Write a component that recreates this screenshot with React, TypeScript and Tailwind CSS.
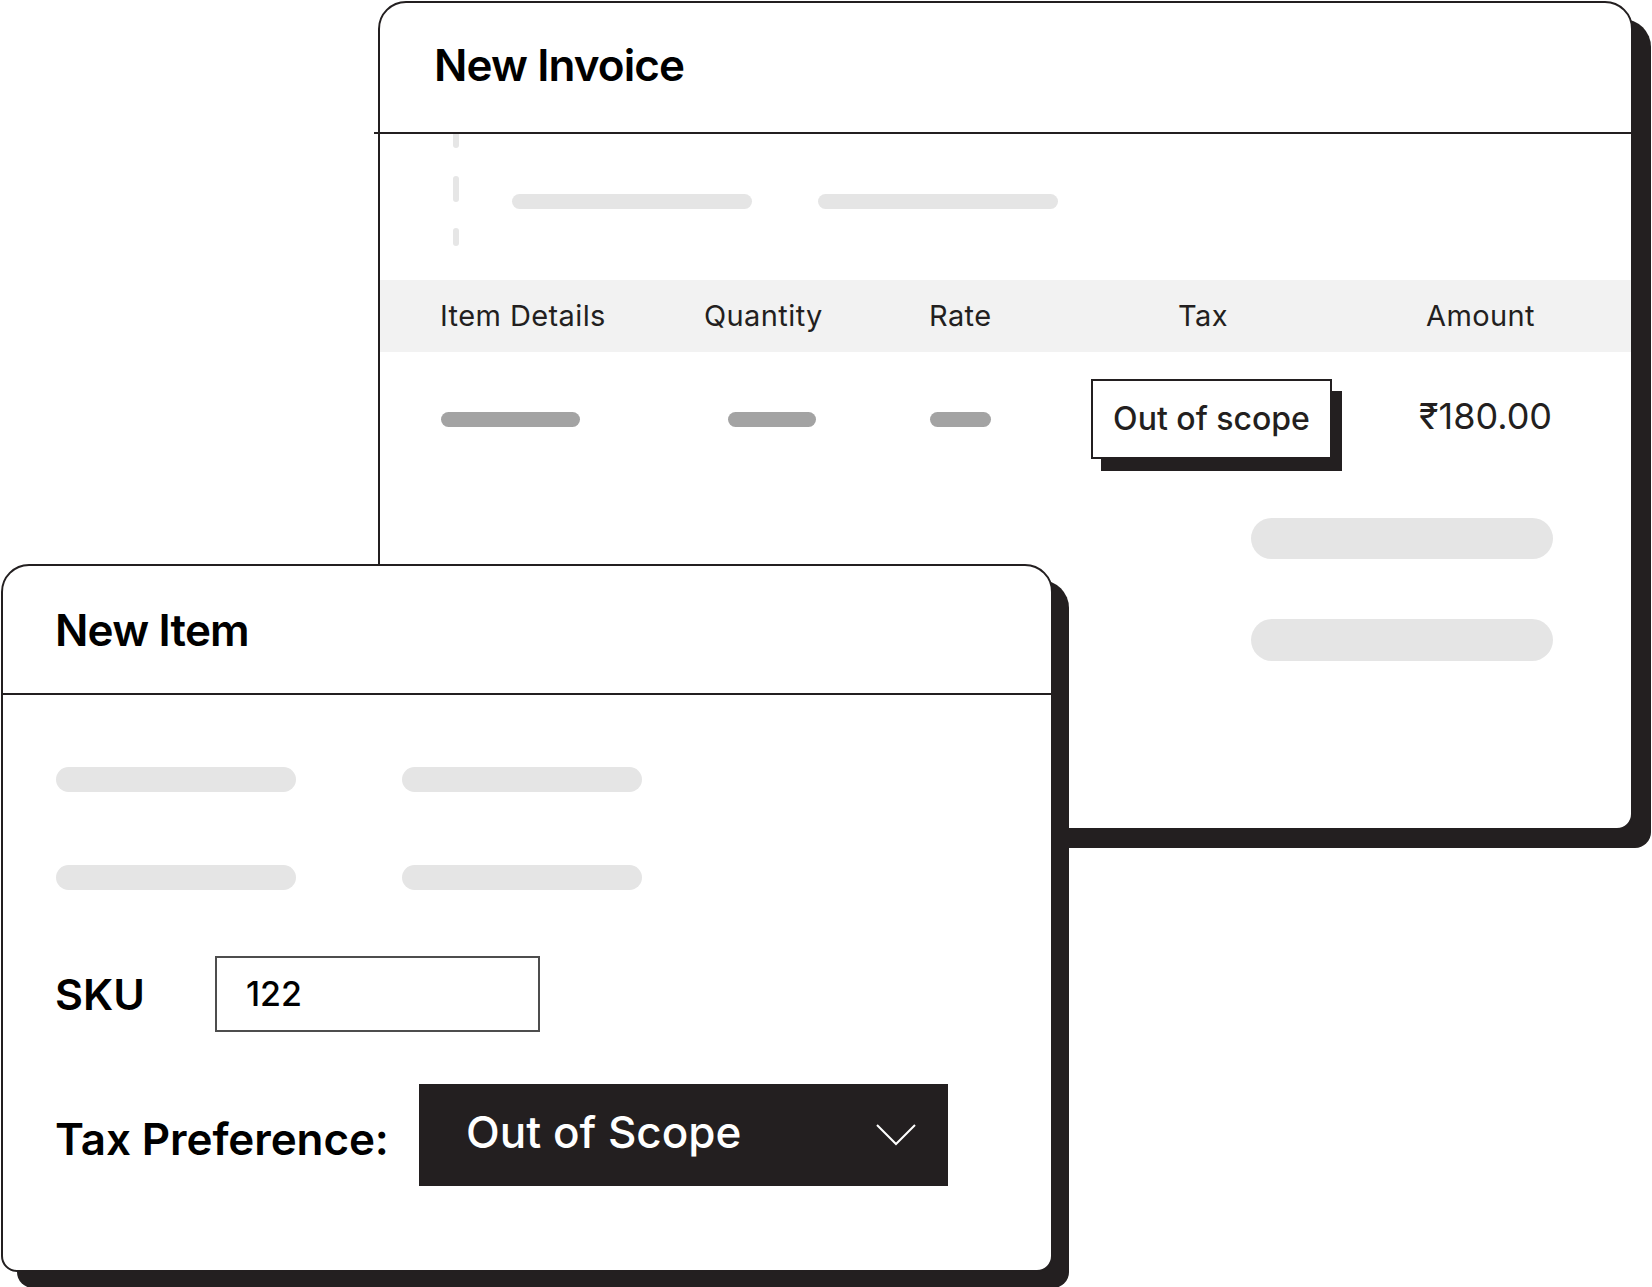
import React from 'react';

const Bar: React.FC<{ className: string }> = ({ className }) => (
  <div className={`rounded-full ${className}`} />
);

const InvoiceCard: React.FC = () => {
  return (
    <div className="absolute left-[378px] top-[1px] w-[1255px] h-[829px] bg-white border-2 border-[#231f20] rounded-t-[28px] rounded-b-[16px] shadow-[18px_18px_0_#231f20]">
      {/* header */}
      <div className="h-[129px] pl-[54px] pt-[36px]">
        <h1 className="text-[44px] leading-[53px] font-semibold text-black tracking-[-0.9px]">New Invoice</h1>
      </div>
      <div className="h-[2px] bg-[#231f20] -ml-[6px]" />

      {/* customer / dates placeholders */}
      <div className="h-[146px] flex">
        <div className="ml-[73px] flex flex-col">
          <div className="w-[6px] h-[14px] rounded-b-full bg-[#e6e6e6]" />
          <div className="w-[6px] h-[26px] mt-[28px] rounded-full bg-[#e6e6e6]" />
          <div className="w-[6px] h-[18px] mt-[26px] rounded-full bg-[#e6e6e6]" />
        </div>
        <div className="ml-[53px] mt-[60px] flex gap-[66px]">
          <Bar className="w-[240px] h-[15px] bg-[#e5e5e5]" />
          <Bar className="w-[240px] h-[15px] bg-[#e5e5e5]" />
        </div>
      </div>

      {/* table header */}
      <div className="h-[72px] bg-[#f2f2f2] flex items-center pl-[60px] text-[29px] font-normal tracking-[0.4px] text-[#231f20]">
        <div className="w-[264px]">Item Details</div>
        <div className="w-[225px]">Quantity</div>
        <div className="w-[249px]">Rate</div>
        <div className="w-[248px]">Tax</div>
        <div>Amount</div>
      </div>

      {/* row */}
      <div className="h-[134px] flex items-center">
        <Bar className="ml-[61px] w-[139px] h-[15px] bg-[#a3a3a3]" />
        <Bar className="ml-[148px] w-[88px] h-[15px] bg-[#a3a3a3]" />
        <Bar className="ml-[114px] w-[61px] h-[15px] bg-[#a3a3a3]" />
        <div className="ml-[100px] w-[241px] h-[80px] border-2 border-[#231f20] bg-white shadow-[10px_12px_0_#231f20] flex items-center justify-center text-[32px] font-medium text-[#231f20]">
          Out of scope
        </div>
        <div className="ml-[87px] mb-[6px] text-[36px] font-normal text-[#231f20]">₹180.00</div>
      </div>

      {/* totals placeholders */}
      <div className="ml-[871px] mt-[32px] flex flex-col gap-[60px]">
        <Bar className="w-[302px] h-[41px] bg-[#e5e5e5]" />
        <Bar className="w-[302px] h-[42px] bg-[#e5e5e5]" />
      </div>
    </div>
  );
};

const NewItemCard: React.FC = () => {
  return (
    <div className="absolute left-[1px] top-[564px] w-[1052px] h-[708px] bg-white border-2 border-[#231f20] rounded-t-[28px] rounded-b-[16px] shadow-[16px_16px_0_#231f20]">
      <div className="h-[127px] pl-[52px] pt-[38px]">
        <h2 className="text-[44px] leading-[53px] font-semibold text-black tracking-[-0.8px]">New Item</h2>
      </div>
      <div className="h-[2px] bg-[#231f20]" />

      <div className="pl-[53px] pt-[72px] flex flex-col gap-[73px]">
        <div className="flex gap-[106px]">
          <Bar className="w-[240px] h-[25px] bg-[#e5e5e5]" />
          <Bar className="w-[240px] h-[25px] bg-[#e5e5e5]" />
        </div>
        <div className="flex gap-[106px]">
          <Bar className="w-[240px] h-[25px] bg-[#e5e5e5]" />
          <Bar className="w-[240px] h-[25px] bg-[#e5e5e5]" />
        </div>
      </div>

      {/* SKU */}
      <div className="mt-[66px] pl-[52px] flex items-center">
        <div className="w-[160px] text-[43px] font-semibold text-black">SKU</div>
        <div className="w-[325px] h-[76px] border-2 border-[#4d4d4d] flex items-center pl-[29px] pb-[2px] text-[34px] font-medium text-black">
          122
        </div>
      </div>

      {/* Tax preference */}
      <div className="mt-[52px] pl-[52px] flex items-center">
        <div className="w-[364px] text-[44px] font-semibold text-black pt-[8px] tracking-[-0.1px]">Tax Preference:</div>
        <div className="w-[529px] h-[102px] bg-[#231f20] flex items-center justify-between pl-[47px] pr-[32px]">
          <span className="text-[44px] font-medium text-white pb-[6px]">Out of Scope</span>
          <svg width="40" height="22" viewBox="0 0 40 22" fill="none">
            <path d="M1 1L20 20L39 1" stroke="white" strokeWidth="2" />
          </svg>
        </div>
      </div>
    </div>
  );
};

export default function App() {
  return (
    <div className="relative w-[1652px] h-[1287px] bg-white overflow-hidden font-['Inter',sans-serif]">
      <InvoiceCard />
      <NewItemCard />
    </div>
  );
}
